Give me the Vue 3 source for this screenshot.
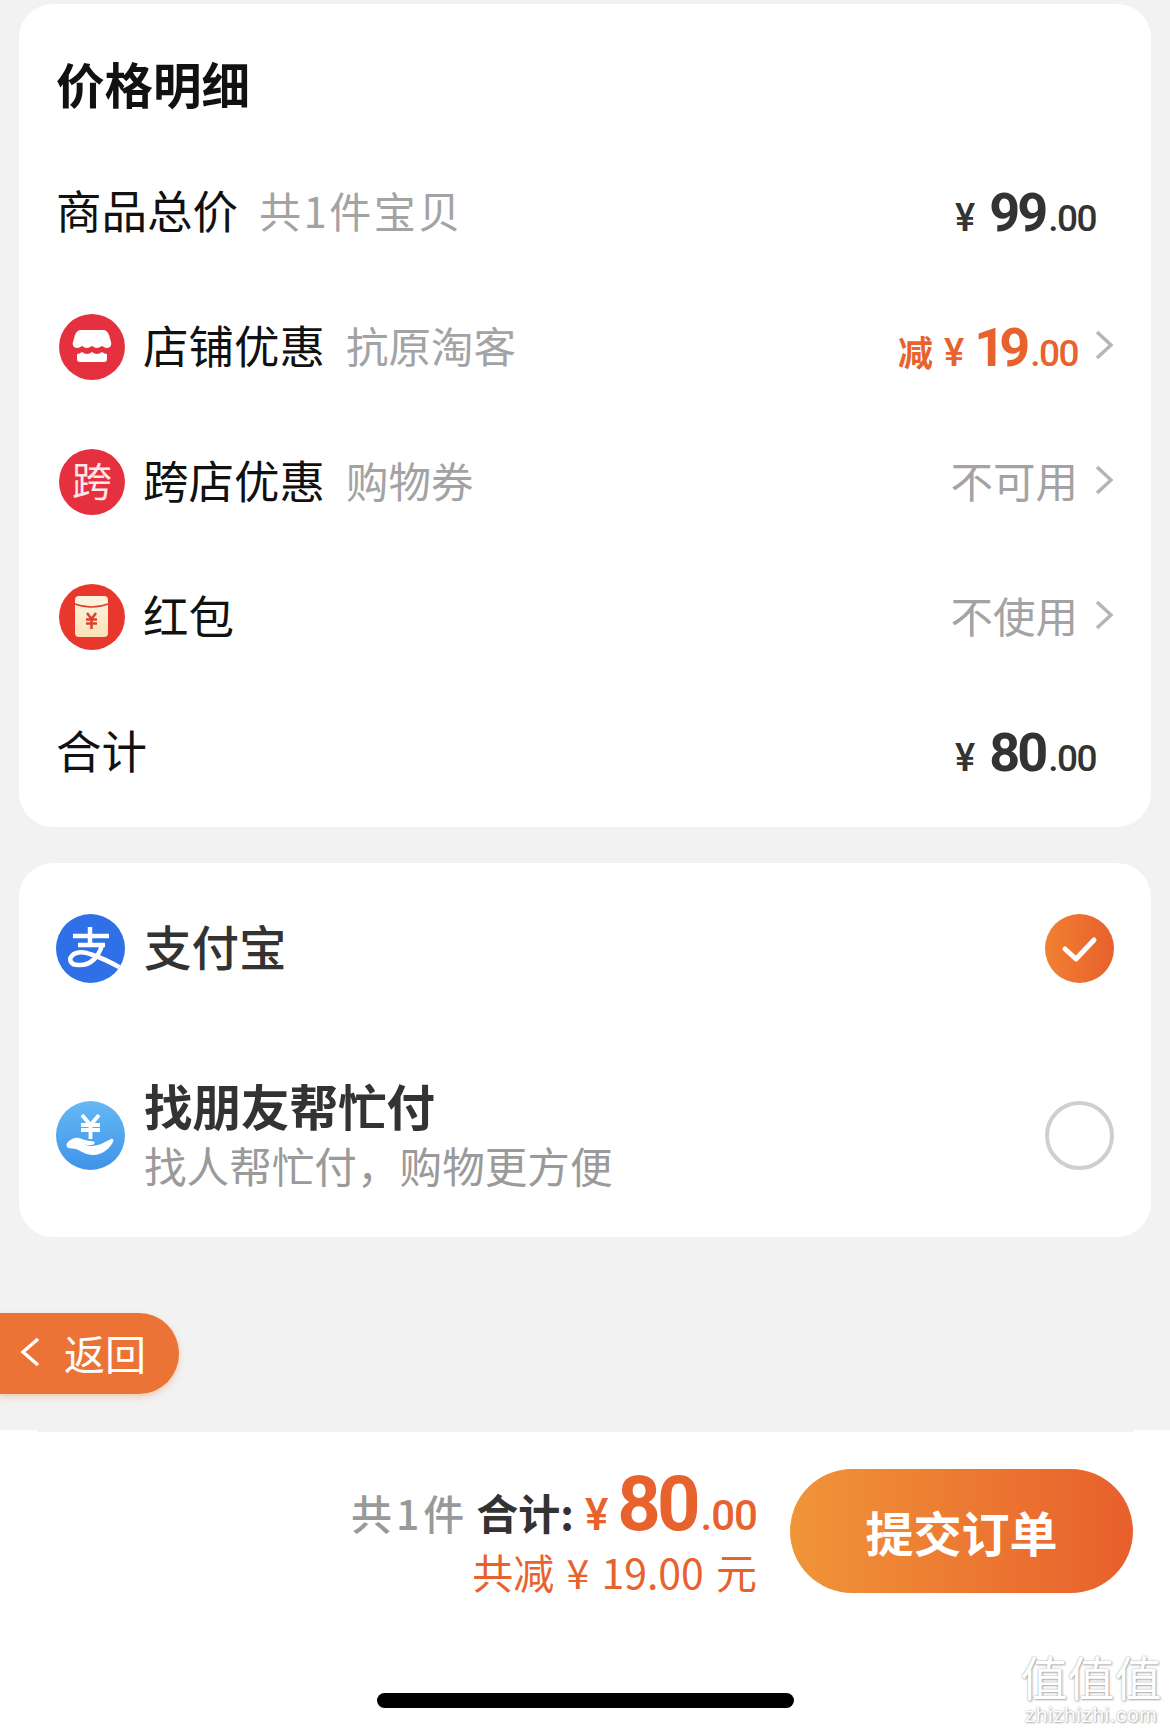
<script setup>
const priceRows = [
  { key: 'shop', name: '店铺优惠', note: '抗原淘客', icon: 'shop', discount: true },
  { key: 'cross', name: '跨店优惠', note: '购物券', icon: 'cross', status: '不可用' },
  { key: 'red', name: '红包', note: '', icon: 'red', status: '不使用' },
]
</script>

<template>
  <div class="page">
    <section class="card price-card">
      <h2 class="title">价格明细</h2>

      <div class="row">
        <span class="name">商品总价</span>
        <span class="note note-first">共1件宝贝</span>
        <span class="price plain">
          <i class="yen">¥</i><b class="int">99</b><i class="dec">.00</i>
        </span>
      </div>

      <div v-for="r in priceRows" :key="r.key" class="row">
        <svg class="row-ic" viewBox="0 0 66 66">
          <template v-if="r.icon === 'shop'">
            <circle cx="33" cy="33" r="33" fill="#e5313f" />
            <path d="M22 16h22c3 0 5 2 6 5l2 7c1 3-1 6-4 6-2 0-3-1-5-2-2 1-4 2-5 2-2 0-3-1-5-2-2 1-4 2-5 2-2 0-3-1-5-2-2 1-3 2-5 2-3 0-5-3-4-6l2-7c1-3 3-5 6-5z" fill="#fff" />
            <path d="M18 40c2 0 3-1 5-2 2 1 3 2 5 2s3-1 5-2c2 1 3 2 5 2s3-1 5-2c2 1 3 2 5 2v5c0 2-1 3-3 3H21c-2 0-3-1-3-3z" fill="#fff" />
          </template>
          <template v-else-if="r.icon === 'cross'">
            <circle cx="33" cy="33" r="33" fill="#e5313f" />
            <text x="33" y="47" text-anchor="middle" class="ic-char">跨</text>
          </template>
          <template v-else>
            <defs>
              <linearGradient id="packet" x1="0" y1="0" x2="0" y2="1">
                <stop offset="0" stop-color="#fdf4e0" />
                <stop offset="1" stop-color="#f9e2b8" />
              </linearGradient>
            </defs>
            <circle cx="33" cy="33" r="33" fill="#e8372c" />
            <rect x="16" y="12" width="33" height="41" rx="4" fill="url(#packet)" />
            <path d="M16 20c10 4 23 4 33 0" fill="none" stroke="#d9402f" stroke-width="1.4" />
            <path d="M28 29l4.500 6 4.500-6M27 35.500h11M27 39.500h11M32.500 35v10" fill="none" stroke="#d9402f" stroke-width="2.500" />
          </template>
        </svg>
        <span class="name">{{ r.name }}</span>
        <span v-if="r.note" class="note">{{ r.note }}</span>
        <span v-if="r.discount" class="price hot">
          <i class="jian">减</i><i class="yen">¥</i><b class="int">19</b><i class="dec">.00</i>
        </span>
        <span v-else class="status">{{ r.status }}</span>
        <svg class="chev" viewBox="0 0 18 30">
          <path d="M2 2l14 13L2 28" fill="none" stroke="#b5b5b5" stroke-width="3.600" />
        </svg>
      </div>

      <div class="row">
        <span class="name">合计</span>
        <span class="price plain">
          <i class="yen">¥</i><b class="int">80</b><i class="dec">.00</i>
        </span>
      </div>
    </section>

    <section class="card pay-card">
      <div class="pay-row pay-a">
        <svg class="pay-ic" viewBox="0 0 69 69">
          <defs>
            <clipPath id="ali"><circle cx="34.5" cy="34.5" r="34.5" /></clipPath>
          </defs>
          <circle cx="34.5" cy="34.5" r="34.5" fill="#2f70e6" />
          <g clip-path="url(#ali)" fill="none" stroke="#fff" stroke-width="4.500">
            <path d="M17 22h36M34 13v17M22 31h27" />
            <path d="M46 31c-3 11-11 21-24 20-7 0-9-5-7-8 3-5 11-6 19-3 13 4 26 11 38 18" />
          </g>
        </svg>
        <span class="pay-name">支付宝</span>
        <span class="radio on">
          <svg viewBox="0 0 69 69">
            <path d="M20 35l11 10 18-19" fill="none" stroke="#fff" stroke-width="5" stroke-linecap="round" stroke-linejoin="round" />
          </svg>
        </span>
      </div>

      <div class="pay-row pay-b">
        <svg class="pay-ic" viewBox="0 0 69 69">
          <defs>
            <linearGradient id="hand" x1="0" y1="0" x2="0" y2="1">
              <stop offset="0" stop-color="#64b9f4" />
              <stop offset="1" stop-color="#3f93e8" />
            </linearGradient>
          </defs>
          <circle cx="34.5" cy="34.5" r="34.5" fill="url(#hand)" />
          <path d="M26 14l8.500 10 8.500-10M25 24h19M25 29h19M34.500 24v14" fill="none" stroke="#fff" stroke-width="3.800" />
          <path d="M12 41c3-3 7-5 11-4 4 1 8 3 12 3 5 0 5 3 1 4-3 0-6 0-8-1 5 3 12 2 17 0l10-5c2-1 3 1 2 3-3 6-10 13-20 13-7 0-12-4-17-6l-8-1c-2-2-2-4 0-6z" fill="#fff" />
        </svg>
        <div class="pay-text">
          <span class="pay-name strong">找朋友帮忙付</span>
          <span class="pay-sub">找人帮忙付，购物更方便</span>
        </div>
        <span class="radio" />
      </div>
    </section>

    <button class="back">
      <svg viewBox="0 0 20 30" class="back-ic">
        <path d="M18 2L3 15l15 13" fill="none" stroke="#fff" stroke-width="3.400" />
      </svg>
      <span>返回</span>
    </button>

    <footer class="bar">
      <div class="bar-edge" />
      <div class="bar-main">
        <div class="sum">
          <div class="sum-top">
            <span class="sum-count">共1件</span>
            <span class="sum-label">合计:</span>
            <span class="sum-yen">¥</span>
            <span class="sum-int">80</span>
            <span class="sum-dec">.00</span>
          </div>
          <div class="sum-off">共减 ¥ 19.00 元</div>
        </div>
        <button class="submit">提交订单</button>
      </div>
      <div class="home" />
      <div class="mark">
        <div class="mark-cn">值值值</div>
        <div class="mark-en">zhizhizhi.com</div>
      </div>
    </footer>
  </div>
</template>

<style scoped>
* { box-sizing: border-box; }
i { font-style: normal; }

.page {
  width: 1170px;
  height: 1733px;
  padding-top: 4px;
  display: flex;
  flex-direction: column;
  background: #f2f2f2;
  font-family: "Noto Sans CJK SC", "Liberation Sans", sans-serif;
  overflow: hidden;
}
.card {
  margin: 0 19px;
  background: #fff;
  border-radius: 34px;
}

.price-card {
  height: 823px;
}
.title {
  margin: 0;
  padding-left: 37px;
  height: 140px;
  line-height: 159px;
  font-size: 48.500px;
  font-weight: 700;
  color: #111;
}
.row {
  height: 135px;
  display: flex;
  align-items: center;
  padding: 0 38px 0 37px;
}
.row-ic {
  width: 66px;
  height: 66px;
  margin: 0 18px 0 3px;
  flex: none;
}
.ic-char {
  font-size: 40px;
  fill: #fde8e8;
  font-family: "Noto Sans CJK SC", sans-serif;
}
.name {
  font-size: 45.500px;
  color: #111;
  margin-bottom: 5px;
}
.note {
  margin-left: 21px;
  margin-bottom: 5px;
  font-size: 42.500px;
  color: #a3a3a3;
}
.note-first {
  font-size: 42px;
  letter-spacing: 2.500px;
}
.price {
  margin-left: auto;
  display: flex;
  align-items: baseline;
  font-family: Roboto, "Noto Sans CJK SC", sans-serif;
  position: relative;
  top: 1px;
}
.price.plain {
  color: #333;
  padding-right: 17px;
}
.price.hot {
  color: #e8622e;
}
.yen {
  font-size: 38px;
  font-weight: 500;
  margin-right: 14px;
}
.int {
  font-size: 54px;
  font-weight: 700;
  letter-spacing: -3px;
  margin-right: 3px;
}
.dec {
  font-size: 37px;
  font-weight: 500;
  letter-spacing: -1.500px;
}
.hot .yen {
  margin-right: 10px;
}
.hot .int {
  letter-spacing: -6px;
  margin-right: 6px;
}
.jian {
  font-family: "Noto Sans CJK SC", sans-serif;
  font-size: 35px;
  font-weight: 700;
  margin-right: 11px;
}
.status {
  margin-left: auto;
  margin-bottom: 5px;
  font-size: 42.500px;
  color: #a3a3a3;
}
.chev {
  width: 18px;
  height: 30px;
  margin-left: 17px;
  margin-bottom: 3px;
  flex: none;
}

.pay-card {
  margin-top: 36px;
  height: 374px;
}
.pay-row {
  display: flex;
  align-items: center;
  padding: 0 37px;
}
.pay-a { height: 170px; }
.pay-b { height: 204px; }
.pay-ic {
  width: 69px;
  height: 69px;
  flex: none;
  margin-right: 19px;
}
.pay-name {
  font-size: 47.500px;
  font-weight: 500;
  color: #333;
  margin-bottom: 5px;
}
.pay-name.strong {
  font-size: 48.500px;
  font-weight: 700;
  line-height: 60px;
  margin-bottom: 0;
  position: relative;
  top: -2px;
}
.pay-text {
  display: flex;
  flex-direction: column;
}
.pay-sub {
  font-size: 42.600px;
  line-height: 56px;
  color: #9a9a9a;
}
.radio {
  margin-left: auto;
  width: 69px;
  height: 69px;
  border-radius: 50%;
  border: 4px solid #cfcfcf;
  flex: none;
}
.radio.on {
  border: 0;
  background: linear-gradient(90deg, #f18032, #e8602c);
}
.radio svg {
  display: block;
  width: 69px;
  height: 69px;
}

.back {
  margin-top: 76px;
  width: 179px;
  height: 81px;
  padding: 0 0 4px 20px;
  border: 0;
  border-radius: 0 40px 40px 0;
  background: #ec7336;
  box-shadow: 0 3px 6px rgba(236, 115, 54, .3);
  color: #fff;
  display: flex;
  align-items: center;
  font-family: inherit;
  font-size: 41px;
}
.back-ic {
  width: 20px;
  height: 30px;
  margin-right: 24px;
}

.bar {
  position: relative;
  margin-top: 36px;
  flex: 1;
  background: #fff;
}
.bar-edge {
  height: 2px;
  margin: 0 37px;
  background: #f2f2f2;
}
.bar-main {
  display: flex;
  justify-content: flex-end;
  padding: 37px 37px 0 0;
}
.sum {
  display: flex;
  flex-direction: column;
  align-items: flex-end;
  height: 124px;
  margin-top: -3px;
  margin-right: 33px;
}
.sum-top {
  display: flex;
  align-items: baseline;
  height: 76px;
  white-space: nowrap;
}
.sum-count {
  font-size: 41px;
  font-weight: 500;
  letter-spacing: 4px;
  color: #999;
  margin-right: 8px;
}
.sum-label {
  font-size: 42px;
  font-weight: 700;
  color: #333;
  margin-right: 11px;
}
.sum-yen {
  font-family: Roboto, sans-serif;
  font-size: 44px;
  font-weight: 500;
  color: #e8622e;
  margin-right: 9px;
}
.sum-int {
  font-family: Roboto, sans-serif;
  font-size: 76px;
  line-height: 1;
  font-weight: 700;
  letter-spacing: -4px;
  color: #e8622e;
  margin-right: 4px;
}
.sum-dec {
  font-family: Roboto, sans-serif;
  font-size: 42px;
  font-weight: 500;
  letter-spacing: -1px;
  color: #e8622e;
}
.sum-off {
  margin-top: 4px;
  font-size: 41px;
  line-height: 50px;
  word-spacing: 3px;
  color: #e8622e;
  white-space: nowrap;
}
.submit {
  width: 343px;
  height: 124px;
  border: 0;
  border-radius: 62px;
  background: linear-gradient(90deg, #f09538, #e85f2c);
  color: #fff;
  font-family: inherit;
  font-size: 48px;
  font-weight: 700;
}
.home {
  width: 417px;
  height: 15px;
  margin: 100px auto 0;
  border-radius: 8px;
  background: #000;
}
.mark {
  position: absolute;
  left: 1020px;
  top: 222px;
  width: 142px;
  text-align: center;
  color: #fff;
  text-shadow: 0 0 2px #9c9c9c, 1px 1px 2px #b5b5b5;
}
.mark-cn {
  font-size: 47px;
  line-height: 47px;
  white-space: nowrap;
}
.mark-en {
  margin-top: 4px;
  font-family: "Liberation Sans", sans-serif;
  font-size: 21px;
  line-height: 24px;
  letter-spacing: .5px;
}
</style>
